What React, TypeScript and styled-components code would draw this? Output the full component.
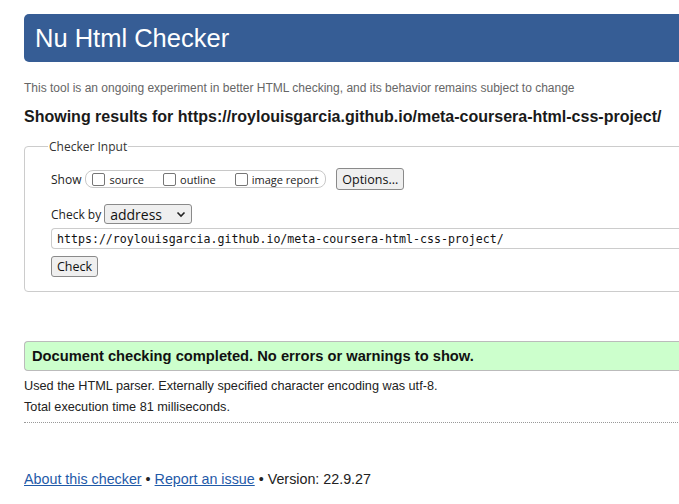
import React from 'react';
import styled, { createGlobalStyle } from 'styled-components';

const GlobalStyle = createGlobalStyle`
  html, body {
    margin: 0;
    padding: 0;
    background: #ffffff;
    overflow: hidden;
  }
  body {
    font-family: "Liberation Sans", Arial, sans-serif;
    color: #222222;
  }
`;

const uiFont = `"Open Sans", "Noto Sans", sans-serif`;

const Page = styled.div`
  width: 780px;
  padding: 14px 0 0 24px;
`;

const Banner = styled.h1`
  margin: 0;
  height: 48px;
  display: flex;
  align-items: center;
  padding-left: 11px;
  background: #365d95;
  color: #ffffff;
  border-radius: 5px 0 0 5px;
  font-size: 25.5px;
  font-weight: normal;
`;

const Intro = styled.p`
  margin: 19px 0 0;
  font-size: 12px;
  color: #666666;
`;

const ResultsTitle = styled.h2`
  margin: 13px 0 0;
  font-size: 16px;
  font-weight: bold;
  color: #1a1a1a;
`;

const InputSet = styled.fieldset`
  margin: 12px 0 0;
  padding: 6px 0 14px 26px;
  border: 1px solid #cccccc;
  border-radius: 4px 0 0 4px;
  font-family: ${uiFont};
  font-size: 12px;
  color: #222222;
`;

const Legend = styled.legend`
  margin-left: -3px;
  padding: 0 1px;
  font-size: 12px;
  color: #333333;
`;

const Row = styled.div<{ $gap?: number; $top?: number }>`
  display: flex;
  align-items: center;
  gap: ${(p) => p.$gap ?? 4}px;
  margin-top: ${(p) => p.$top ?? 0}px;
`;

const Label = styled.span`
  font-size: 12px;
`;

const OptionGroup = styled.div`
  display: flex;
  align-items: center;
  gap: 19px;
  height: 16px;
  padding: 0 7px 0 6px;
  margin-left: 1px;
  border: 1px solid #c8c8c8;
  border-radius: 8px;
`;

const Option = styled.label`
  display: flex;
  align-items: center;
  gap: 4px;
  font-size: 11px;
`;

const Box = styled.span`
  width: 11px;
  height: 11px;
  border: 1px solid #767676;
  border-radius: 2px;
  background: #ffffff;
`;

const Button = styled.button<{ $height: number }>`
  height: ${(p) => p.$height}px;
  padding: 0 5px;
  border: 1px solid #8a8a8a;
  border-radius: 3px;
  background: #efefef;
  font-family: ${uiFont};
  font-size: 12.5px;
  color: #111111;
`;

const Select = styled.div`
  display: flex;
  align-items: center;
  justify-content: space-between;
  width: 76px;
  height: 18px;
  padding: 0 5px 0 5px;
  border: 1px solid #8a8a8a;
  border-radius: 3px;
  background: #efefef;
  font-size: 14px;
  color: #111111;
`;

const UrlField = styled.div`
  margin-top: 4px;
  height: 19px;
  display: flex;
  align-items: center;
  padding-left: 5px;
  border: 1px solid #cccccc;
  border-right: none;
  border-radius: 4px 0 0 4px;
  font-family: "DejaVu Sans Mono", "Liberation Mono", monospace;
  font-size: 11.6px;
  color: #111111;
`;

const Notice = styled.div`
  margin-top: 49px;
  height: 28px;
  display: flex;
  align-items: center;
  padding-left: 7px;
  background: #ccffcc;
  border: 1px solid #bbbbbb;
  border-right: none;
  border-radius: 4px 0 0 4px;
  font-size: 14.7px;
  font-weight: bold;
  color: #111111;
`;

const Detail = styled.p<{ $top: number }>`
  margin: ${(p) => p.$top}px 0 0;
  font-size: 12.7px;
  line-height: 14px;
  color: #222222;
`;

const Rule = styled.hr`
  margin: 8px 0 0;
  border: none;
  border-top: 1px dotted #999999;
`;

const Footer = styled.p`
  margin: 48px 0 0;
  font-size: 14.3px;
  color: #222222;
`;

const Link = styled.a`
  color: #1f5aa8;
  text-decoration: underline;
`;

const Chevron = () => (
  <svg width="10" height="7" viewBox="0 0 10 7">
    <path d="M1.5 1.5 L5 5 L8.5 1.5" fill="none" stroke="#222" strokeWidth="1.6" />
  </svg>
);

export default function App() {
  return (
    <Page>
      <GlobalStyle />
      <Banner>Nu Html Checker</Banner>
      <Intro>
        This tool is an ongoing experiment in better HTML checking, and its behavior remains subject to change
      </Intro>
      <ResultsTitle>Showing results for https://roylouisgarcia.github.io/meta-coursera-html-css-project/</ResultsTitle>
      <InputSet>
        <Legend>Checker Input</Legend>
        <Row $top={7} $gap={3}>
          <Label>Show</Label>
          <OptionGroup>
            <Option><Box />source</Option>
            <Option><Box />outline</Option>
            <Option><Box />image report</Option>
          </OptionGroup>
          <Button $height={22} style={{ marginLeft: 7 }}>Options...</Button>
        </Row>
        <Row $top={14} $gap={3}>
          <Label>Check by</Label>
          <Select>
            <span>address</span>
            <Chevron />
          </Select>
        </Row>
        <UrlField>https://roylouisgarcia.github.io/meta-coursera-html-css-project/</UrlField>
        <Row $top={7}>
          <Button $height={21}>Check</Button>
        </Row>
      </InputSet>
      <Notice>Document checking completed. No errors or warnings to show.</Notice>
      <Detail $top={8}>Used the HTML parser. Externally specified character encoding was utf-8.</Detail>
      <Detail $top={7}>Total execution time 81 milliseconds.</Detail>
      <Rule />
      <Footer>
        <Link href="#">About this checker</Link> • <Link href="#">Report an issue</Link> • Version: 22.9.27
      </Footer>
    </Page>
  );
}
